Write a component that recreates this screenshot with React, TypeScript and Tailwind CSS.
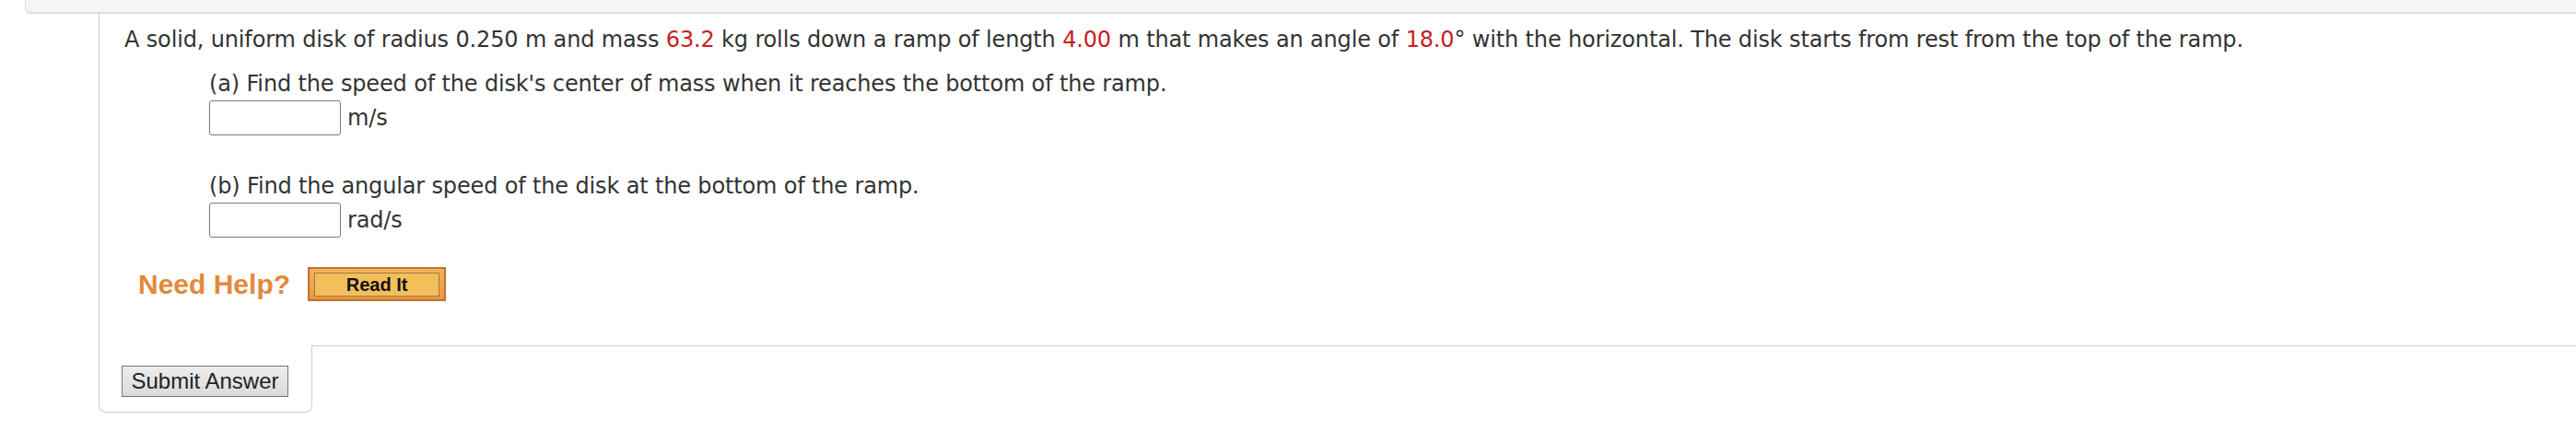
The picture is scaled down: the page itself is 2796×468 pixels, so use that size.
const hi = "text-[#c8201e]";

export default function App() {
  return (
    <div className="w-[2796px] h-[468px] bg-white overflow-hidden font-['DejaVu_Sans',sans-serif] text-[#333333]">
      {/* tail of the previous question box */}
      <div className="ml-[27px] h-[15px] bg-[#f5f5f5] border-l border-b-2 border-[#dddddd] rounded-bl-[6px]" />

      <div className="ml-[107px]">
        {/* Question body */}
        <div className="h-[360px] border-l border-[#cccccc] pl-[27px] pt-[10px] text-[24px] leading-[36px] tracking-[-0.15px]">
          <p className="whitespace-nowrap">
            A solid, uniform disk of radius 0.250 m and mass <span className={hi}>63.2</span> kg rolls down a ramp of
            length <span className={hi}>4.00</span> m that makes an angle of <span className={hi}>18.0</span>° with the
            horizontal. The disk starts from rest from the top of the ramp.
          </p>

          <div className="pl-[92px] mt-[12px]">
            <p>(a) Find the speed of the disk's center of mass when it reaches the bottom of the ramp.</p>
            <div className="flex items-center gap-[7px]">
              <input
                type="text"
                className="w-[143px] h-[38px] border border-[#7a7a7a] rounded-[3px] bg-white outline-none"
              />
              <span>m/s</span>
            </div>

            <p className="mt-[37px]">(b) Find the angular speed of the disk at the bottom of the ramp.</p>
            <div className="flex items-center gap-[7px]">
              <input
                type="text"
                className="w-[143px] h-[38px] border border-[#7a7a7a] rounded-[3px] bg-white outline-none"
              />
              <span>rad/s</span>
            </div>
          </div>

          {/* Need Help? */}
          <div className="mt-[32px] pl-[15px] flex items-center gap-[19px] h-[37px] tracking-normal">
            <span className="font-['Liberation_Sans',Arial,sans-serif] font-bold text-[30px] leading-none text-[#e4883a]">
              Need Help?
            </span>
            <button className="w-[150px] h-[37px] border-2 border-[#b77632] bg-gradient-to-b from-[#f4b25c] to-[#e9973f] pt-[4px] pb-[3px] px-[5px] flex">
              <span className="flex-1 flex items-center justify-center border border-[#a47a46] bg-[#f3bf5c] font-['Liberation_Sans',Arial,sans-serif] font-bold text-[20px] leading-none text-[#111111]">
                Read It
              </span>
            </button>
          </div>
        </div>

        {/* Submit area */}
        <div className="flex">
          <div className="w-[232px] h-[73px] border-l border-r border-b border-[#cccccc] rounded-b-[8px] pl-[24px] pt-[22px]">
            <button className="w-[181px] h-[34px] border border-[#767676] bg-gradient-to-b from-[#ededed] to-[#dadada] font-['Liberation_Sans',Arial,sans-serif] text-[24px] leading-none text-[#222222]">
              Submit Answer
            </button>
          </div>
          <div className="flex-1 border-t border-[#cccccc]" />
        </div>
      </div>
    </div>
  );
}
